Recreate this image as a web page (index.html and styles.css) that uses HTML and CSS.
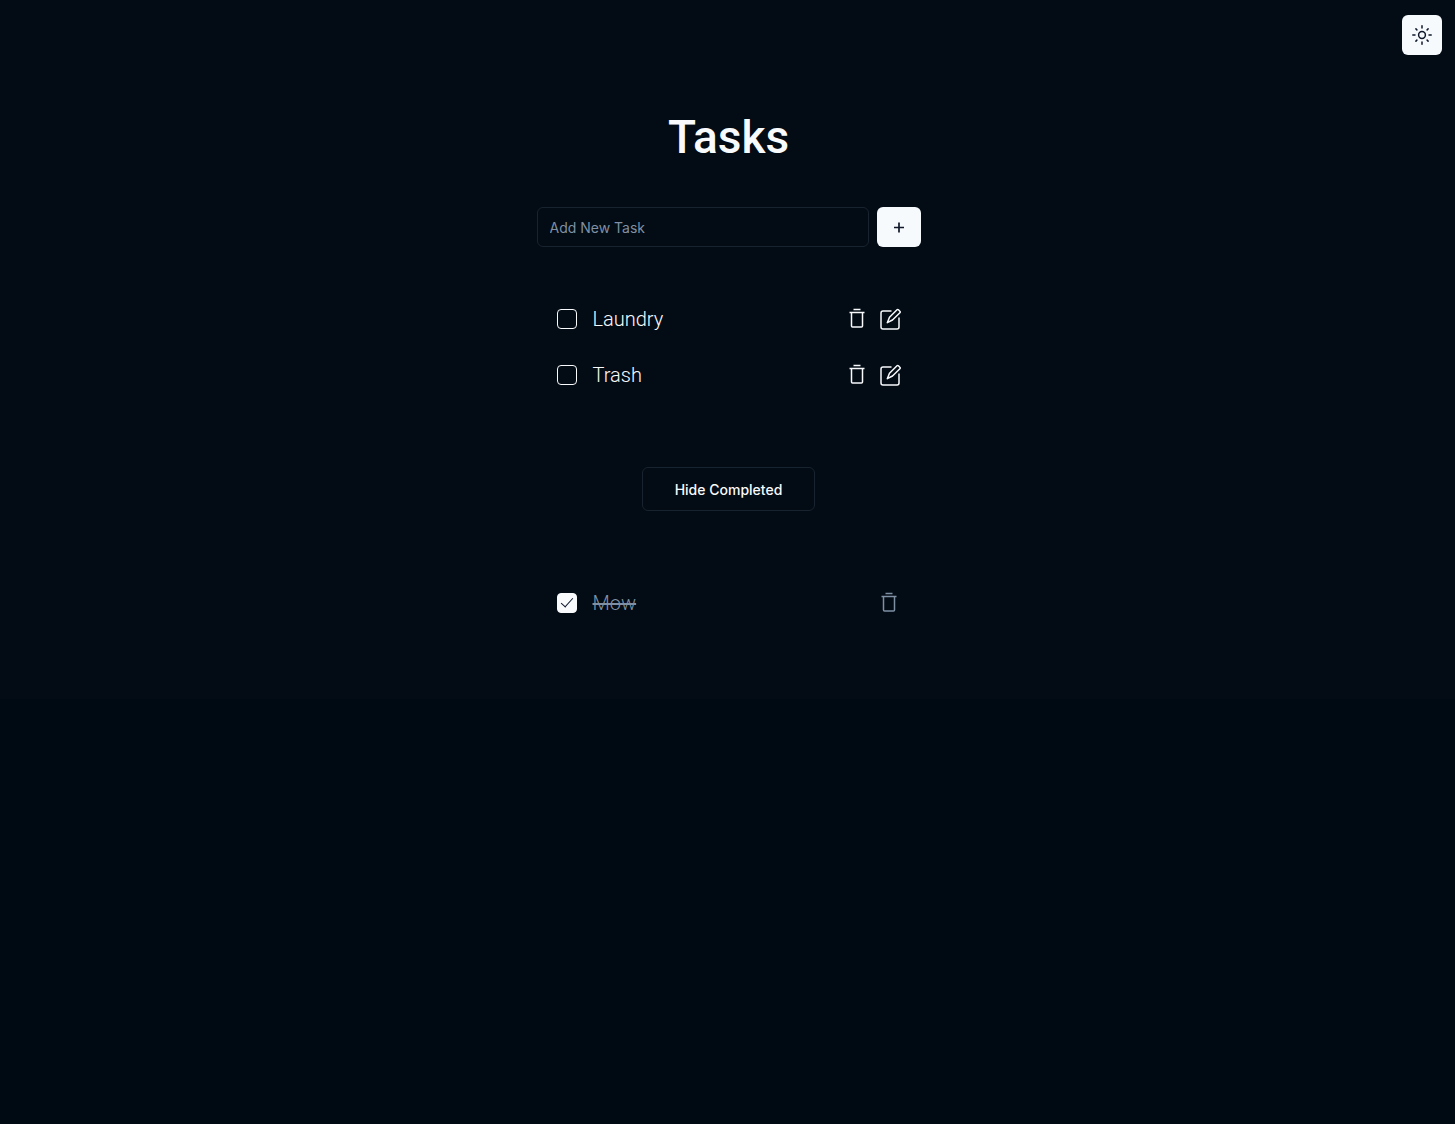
FILE: index.html
```html
<!DOCTYPE html>
<html lang="en">
<head>
<meta charset="utf-8">
<meta name="viewport" content="width=device-width, initial-scale=1">
<title>Tasks</title>
<link rel="stylesheet" href="styles.css">
</head>
<body>
<svg class="sprite" aria-hidden="true">
  <symbol id="trash" viewBox="0 0 24 24"><path d="M8.500 2.500h7M4.500 5.500h15M6.500 5.500v13.500a1 1 0 0 0 1 1h9a1 1 0 0 0 1-1v-13.500"/></symbol>
  <symbol id="edit" viewBox="0 0 24 24"><path d="M14.500 4H6a2 2 0 0 0-2 2V20a2 2 0 0 0 2 2h14a2 2 0 0 0 2-2V10.500M20 2.800 12.500 10.200 10.300 15.700 15.500 13 22.900 5.700c.5-.5.5-1 0-1.400L21.400 2.800c-.4-.4-1-.4-1.400 0Z"/></symbol>
</svg>
<header class="topbar">
  <button class="icon-button theme-toggle" type="button" aria-label="Toggle theme">
    <svg width="22" height="22" viewBox="0 0 22 22" fill="none" stroke="currentColor" stroke-width="1.500" stroke-linecap="round"><circle cx="11" cy="11" r="3.400"/><path d="M11 1.800v2.200M11 18v2.200M1.800 11H4M18 11h2.200M4.900 4.900l1 1M16.100 16.100l1 1M4.900 17.100l1-1M16.100 5.900l1-1"/></svg>
  </button>
</header>
<main class="page">
  <h1 class="title">Tasks</h1>
  <form class="add-form">
    <input class="add-input" type="text" placeholder="Add New Task" aria-label="Add New Task">
    <button class="icon-button add-button" type="button" aria-label="Add task">
      <svg width="12" height="12" viewBox="0 0 12 12" fill="none" stroke="currentColor" stroke-width="1.700"><path d="M6 1.500v10M1 6.500h10"/></svg>
    </button>
  </form>
  <ul class="tasks">
    <li class="task">
      <input class="check" type="checkbox" id="laundry">
      <label class="name" for="laundry">Laundry</label>
      <button class="action" type="button" aria-label="Delete Laundry"><svg><use href="#trash"/></svg></button>
      <button class="action" type="button" aria-label="Edit Laundry"><svg><use href="#edit"/></svg></button>
    </li>
    <li class="task">
      <input class="check" type="checkbox" id="take-trash">
      <label class="name" for="take-trash">Trash</label>
      <button class="action" type="button" aria-label="Delete Trash"><svg><use href="#trash"/></svg></button>
      <button class="action" type="button" aria-label="Edit Trash"><svg><use href="#edit"/></svg></button>
    </li>
  </ul>
  <button class="toggle-completed" type="button">Hide Completed</button>
  <ul class="tasks">
    <li class="task done">
      <input class="check" type="checkbox" id="mow" checked>
      <label class="name" for="mow">Mow</label>
      <button class="action" type="button" aria-label="Delete Mow"><svg><use href="#trash"/></svg></button>
    </li>
  </ul>
</main>
</body>
</html>
```
FILE: styles.css
```css
* { box-sizing: border-box; }

body {
  margin: 0;
  min-height: 100vh;
  background: #000a12;
  color: #f8fafc;
  font-family: Inter, "Liberation Sans", sans-serif;
}

.sprite { display: none; }

button, input { font: inherit; color: inherit; }
button { padding: 0; border: 0; background: none; cursor: pointer; }
svg { display: block; }

.topbar {
  display: flex;
  justify-content: flex-end;
  padding: 15px 13px 0;
  background: #030b14;
}

.icon-button {
  display: grid;
  place-items: center;
  height: 40px;
  border-radius: 6px;
  background: #f6fafd;
  color: #0f172a;
}
.theme-toggle { width: 40px; }
.add-button { width: 44px; }

.page {
  display: flex;
  flex-direction: column;
  align-items: center;
  padding: 56px 0 68px 2px;
  background: #030b14;
}

.title {
  margin: 0;
  font-family: Roboto, Inter, sans-serif;
  font-size: 46px;
  line-height: 52px;
  font-weight: 500;
}

.add-form {
  display: flex;
  gap: 8px;
  width: 100%;
  max-width: 384px;
  margin-top: 44px;
}

.add-input {
  flex: 1;
  min-width: 0;
  height: 40px;
  padding: 0 12px;
  border: 1px solid #172430;
  border-radius: 6px;
  background: transparent;
  font-size: 14px;
}
.add-input::placeholder { color: #7f90a5; opacity: 1; }

.tasks {
  width: 100%;
  max-width: 384px;
  margin: 0;
  padding: 0 20px;
  list-style: none;
}
.add-form + .tasks { margin-top: 44px; }

.task {
  display: flex;
  align-items: center;
  gap: 8px;
  height: 56px;
}

.check {
  appearance: none;
  display: grid;
  place-items: center;
  width: 20px;
  height: 20px;
  margin: 0 8px 0 0;
  border: 1px solid #f8fafc;
  border-radius: 4px;
}
.check:checked { background: #f8fafc; }
.check:checked::after {
  content: "";
  width: 11px;
  height: 5px;
  margin-bottom: 4px;
  border: solid #0f172a;
  border-width: 0 0 1px 1px;
  transform: rotate(-48deg);
}

.name {
  flex: 1;
  font-family: Roboto, Inter, sans-serif;
  font-size: 20px;
  line-height: 28px;
  font-weight: 300;
}

.action svg {
  width: 24px;
  height: 24px;
  fill: none;
  stroke: currentColor;
  stroke-width: 1.5;
  stroke-linejoin: round;
}

.done { color: #7f90a5; }
.done .name { text-decoration: line-through; }

.toggle-completed {
  height: 44px;
  margin: 64px 0;
  padding: 0 32px;
  border: 1px solid #172430;
  border-radius: 6px;
  font-size: 14px;
  font-weight: 500;
}
```
